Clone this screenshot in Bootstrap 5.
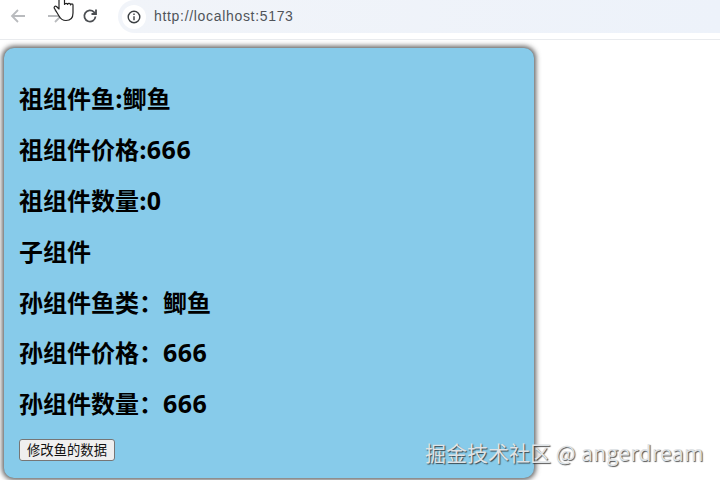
<!DOCTYPE html>
<html lang="zh">
<head>
<meta charset="utf-8">
<title>Demo</title>
<link href="https://cdn.jsdelivr.net/npm/bootstrap@5.3.0/dist/css/bootstrap.min.css" rel="stylesheet">
<style>
html,body{height:480px;overflow:hidden;background:#fff;}
body{font-family:"Noto Sans CJK SC","Noto Sans",sans-serif;position:relative;}
.browser-bar{height:40px;background:#fff;border-bottom:1px solid #e9ebee;padding-left:8px;padding-bottom:7px;}
.nav-ico{width:20px;height:20px;flex:none;}
.ico-fwd{margin-left:17px;}
.ico-reload{margin-left:15px;}
.addr-pill{margin-left:18px;height:33px;flex:1;border-radius:17px 0 0 17px;background:linear-gradient(90deg,#f1f4f9,#edf2fa);align-self:flex-start;padding-left:4px;}
.info-chip{width:24px;height:24px;border-radius:50%;background:#fff;}
.url-txt{font-family:"Liberation Sans",sans-serif;font-size:14px;letter-spacing:.68px;color:#50545a;margin-left:8px;}
.fish-card{width:530px;height:430px;margin:8px 0 0 4px;background:#87cbea;border-radius:10px;box-shadow:0 0 5px 2px rgba(60,60,60,.8);padding:33px 15px 0;}
.fish-line{font-size:24px;font-weight:700;line-height:34px;margin:0 0 17px;color:#000;font-family:"Noto Sans CJK SC",sans-serif;white-space:nowrap;}
.fish-line.tight-row{margin-bottom:16px;}
.fish-num{font-family:"Open Sans","Noto Sans",sans-serif;font-size:25px;letter-spacing:.5px;}
.fish-btn{display:block;font-family:"Noto Sans CJK SC",sans-serif;font-size:13.33px;line-height:18px;height:22px;width:96px;padding:0;color:#111;background:#efefef;border:1px solid #767676;border-radius:3px;margin-top:19px;}
.hand{position:absolute;left:53px;top:-4px;width:22px;height:26px;}
.mark-wm{position:absolute;left:425px;top:438px;font-size:21px;line-height:28px;color:#dfe3e6;font-family:"Noto Sans CJK SC",sans-serif;text-shadow:1px 1px 1px rgba(40,40,40,.8);white-space:nowrap;}
.mark-wm span{letter-spacing:.35px;}
</style>
</head>
<body>
<div class="browser-bar d-flex align-items-center">
  <svg class="nav-ico" viewBox="0 0 20 20" fill="none" stroke="#b9bbbe" stroke-width="1.8"><path d="M17 10H4M10 4l-6 6 6 6"/></svg>
  <svg class="nav-ico ico-fwd" viewBox="0 0 20 20" fill="none" stroke="#b9bbbe" stroke-width="1.8"><path d="M3 10h13M10 4l6 6-6 6"/></svg>
  <svg class="nav-ico ico-reload" viewBox="0 0 20 20" fill="none" stroke="#4b4e52" stroke-width="1.8"><path d="M15.500 10.500a5.600 5.600 0 1 1-1.500-4.400L16 8"/><path d="M16 3.500V8h-4.500"/></svg>
  <div class="addr-pill d-flex align-items-center">
    <div class="info-chip d-flex align-items-center justify-content-center">
      <svg width="16" height="16" viewBox="0 0 16 16" fill="none" stroke="#3c4043" stroke-width="1.4"><circle cx="8" cy="8" r="5.800"/><path d="M8 7.200v4M8 4.600v1.500"/></svg>
    </div>
    <span class="url-txt">http://localhost:5173</span>
  </div>
</div>
<div class="fish-card">
  <p class="fish-line">祖组件鱼:鲫鱼</p>
  <p class="fish-line">祖组件价格:<span class="fish-num">666</span></p>
  <p class="fish-line">祖组件数量:<span class="fish-num">0</span></p>
  <p class="fish-line">子组件</p>
  <p class="fish-line tight-row">孙组件鱼类：鲫鱼</p>
  <p class="fish-line">孙组件价格：<span class="fish-num">666</span></p>
  <p class="fish-line">孙组件数量：<span class="fish-num">666</span></p>
  <button type="button" class="fish-btn">修改鱼的数据</button>
</div>
<svg class="hand" viewBox="0 0 22 26" fill="#fff" stroke="#222" stroke-width="1.2" stroke-linejoin="round"><path d="M6 0v13L3.500 10.500C2 9.500.5 11 1.500 12.500L6 20c1.500 3 3.500 4.500 7 4.500 4.500 0 7-3 7-7.500V9c0-1.500-2-1.500-2.500 0 0-2-2.500-2-3-.5 0-1.500-2.500-1.500-3 0V0C11.500-1.500 9-1.500 9 0Z"/></svg>
<div class="mark-wm">掘金技术社区 <span>@ angerdream</span></div>
<script src="https://cdn.jsdelivr.net/npm/bootstrap@5.3.0/dist/js/bootstrap.bundle.min.js"></script>
</body>
</html>
